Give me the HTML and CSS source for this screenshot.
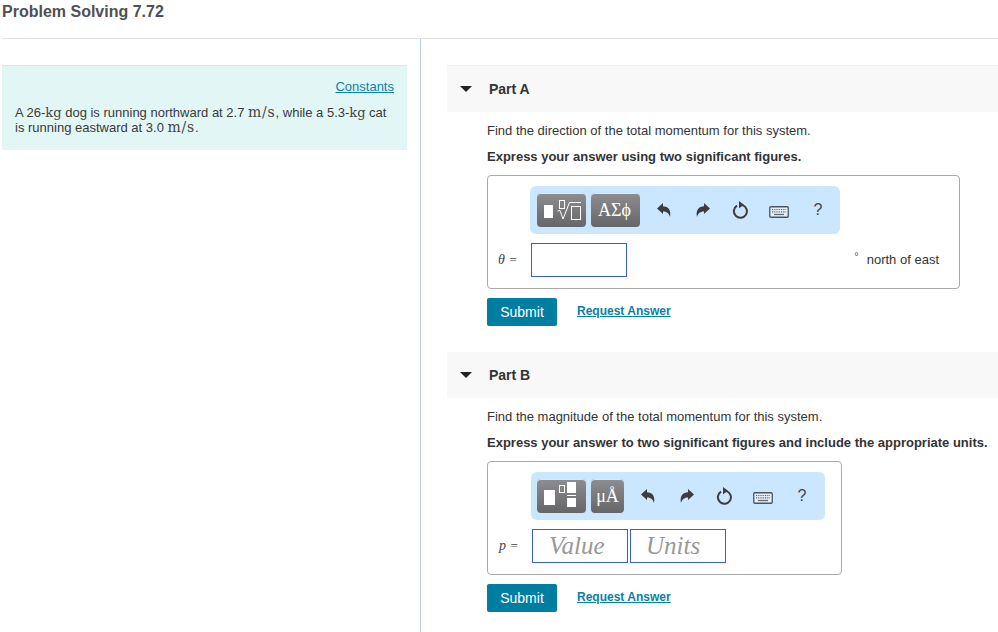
FILE: index.html
```html
<!DOCTYPE html>
<html lang="en">
<head>
<meta charset="utf-8">
<title>Problem Solving 7.72</title>
<link rel="stylesheet" href="styles.css">
</head>
<body>
<header class="page-head"><h1>Problem Solving 7.72</h1></header>
<main class="layout">
  <aside class="left">
    <section class="intro">
      <div class="constants"><a href="#">Constants</a></div>
      <p>A 26-<span class="math kg">kg</span> dog is running northward at 2.7 <span class="math ms">m/s</span>, while a 5.3-<span class="math kg">kg</span> cat is running eastward at 3.0 <span class="math ms">m/s</span>.</p>
    </section>
  </aside>
  <div class="right">
    <section class="part part-a">
      <div class="part-head"><span class="caret"></span><h2>Part A</h2></div>
      <div class="part-body">
        <p class="q">Find the direction of the total momentum for this system.</p>
        <p class="q strong">Express your answer using two significant figures.</p>
        <div class="answer answer-a">
          <div class="toolbar toolbar-a">
            <button class="tbtn wide" type="button">
              <svg width="49" height="34" viewBox="0 0 49 34"><rect x="7" y="12" width="9" height="13" fill="#fff"/><rect x="22.500" y="7.500" width="5" height="8" fill="none" stroke="#fff"/><path d="M20.500 18 23 17.500 26 26 32.500 9.500H44" fill="none" stroke="#fff"/><rect x="34.500" y="13.500" width="9" height="13" fill="none" stroke="#fff"/></svg>
            </button>
            <button class="tbtn sym wide" type="button">ΑΣϕ</button>
            <div class="tools">
              <svg class="ic undo-ic" width="16" height="16" viewBox="0 0 16 16"><use href="#undo"/></svg>
              <svg class="ic redo-ic" width="16" height="16" viewBox="0 0 16 16"><use href="#redo"/></svg>
              <svg class="ic reset-ic" width="18" height="18" viewBox="0 0 18 18"><use href="#reset"/></svg>
              <svg class="ic kbd-ic" width="20" height="12" viewBox="0 0 20 12"><use href="#kbd"/></svg>
              <span class="help">?</span>
            </div>
          </div>
          <div class="entry">
            <span class="var">θ <i>=</i></span>
            <span class="field"></span>
            <span class="unit"><sup>°</sup><span>north of east</span></span>
          </div>
        </div>
        <div class="actions"><button class="submit" type="button">Submit</button><a class="req" href="#">Request Answer</a></div>
      </div>
    </section>
    <section class="part part-b">
      <div class="part-head"><span class="caret"></span><h2>Part B</h2></div>
      <div class="part-body">
        <p class="q">Find the magnitude of the total momentum for this system.</p>
        <p class="q strong">Express your answer to two significant figures and include the appropriate units.</p>
        <div class="answer answer-b">
          <div class="toolbar toolbar-b">
            <button class="tbtn wide" type="button">
              <svg width="49" height="34" viewBox="0 0 49 34"><rect x="7" y="11" width="11" height="15" fill="#fff"/><rect x="22.500" y="6.500" width="5" height="7" fill="none" stroke="#fff"/><rect x="30" y="3" width="9" height="11" fill="#fff"/><rect x="30" y="16" width="9" height="1" fill="#fff"/><rect x="30" y="19" width="9" height="9" fill="#fff"/></svg>
            </button>
            <button class="tbtn sym narrow" type="button">μÅ</button>
            <div class="tools">
              <svg class="ic undo-ic" width="16" height="16" viewBox="0 0 16 16"><use href="#undo"/></svg>
              <svg class="ic redo-ic" width="16" height="16" viewBox="0 0 16 16"><use href="#redo"/></svg>
              <svg class="ic reset-ic" width="18" height="18" viewBox="0 0 18 18"><use href="#reset"/></svg>
              <svg class="ic kbd-ic" width="20" height="12" viewBox="0 0 20 12"><use href="#kbd"/></svg>
              <span class="help">?</span>
            </div>
          </div>
          <div class="entry entry-b">
            <span class="var">p <i>=</i></span>
            <span class="field ph">Value</span>
            <span class="field ph">Units</span>
          </div>
        </div>
        <div class="actions"><button class="submit" type="button">Submit</button><a class="req" href="#">Request Answer</a></div>
      </div>
    </section>
  </div>
</main>
<svg class="defs" width="0" height="0" aria-hidden="true">
  <defs>
    <path id="undo" d="M1 6.500 7 1V4.200C12 4.200 15.500 8 14 15 12.800 11 10.500 9.500 7 9.500V12Z" fill="#3d3d3d"/>
    <path id="redo" d="M15 6.500 9 1V4.200C4 4.200 .5 8 2 15 3.200 11 5.500 9.500 9 9.500V12Z" fill="#3d3d3d"/>
    <g id="reset"><path d="M10.500 4.100A6.500 6.500 0 1 1 5 4.700" fill="none" stroke="#3d3d3d" stroke-width="2"/><path d="M7 0 12 3.800 7 7.200Z" fill="#3d3d3d"/></g>
    <g id="kbd"><rect x=".75" y=".75" width="18.500" height="10.500" rx="1" fill="#e4eef7" stroke="#4a5560" stroke-width="1.300"/><path d="M3 3.500h14M3 5.800h14" stroke="#5b6670" stroke-width="1.200" stroke-dasharray="1 .8"/><path d="M5 8.500h10" stroke="#5b6670" stroke-width="1.200"/></g>
  </defs>
</svg>
</body>
</html>
```
FILE: styles.css
```css
* { box-sizing: border-box; }
html, body { margin: 0; padding: 0; }
body {
  width: 998px;
  height: 632px;
  overflow: hidden;
  background: #fff;
  font-family: "Liberation Sans", Arial, sans-serif;
  color: #333;
}
.defs { position: absolute; }
.page-head {
  height: 39px;
  margin-left: 2px;
  border-bottom: 1px solid #dfe3e8;
}
h1 {
  margin: 0;
  padding-top: 3px;
  font-size: 16px;
  line-height: 18px;
  font-weight: 700;
  color: #505050;
}
.layout { display: flex; height: 593px; }
.left {
  width: 421px;
  flex: none;
  padding: 26px 13px 0 2px;
  border-right: 1px solid #b6cde2;
}
.intro {
  height: 85px;
  padding: 12px 13px 0 13px;
  background: #e2f6f6;
  border-top: 1px solid #d8e4e6;
}
.constants { text-align: right; line-height: 16px; height: 18px; }
.constants a { color: #0a83aa; font-size: 13px; }
.intro p { margin: 0; padding-top: 9px; line-height: 15px; font-size: 13px; color: #3a3a3a; }
.math { font-family: "DejaVu Serif", serif; line-height: 15px; color: #444; }
.kg { font-size: 13px; }
.ms { font-size: 14px; letter-spacing: .8px; }
.right { flex: 1; padding: 26px 0 0 26px; min-width: 0; }
.part-b { margin-top: 26px; }
.part-head {
  display: flex;
  align-items: center;
  height: 46px;
  background: #f8f8f8;
  padding-left: 13px;
}
.part-a .part-head { height: 47px; border-top: 1px solid #eeeeee; }
.caret {
  width: 0; height: 0;
  border-left: 6px solid transparent;
  border-right: 6px solid transparent;
  border-top: 6px solid #222;
}
h2 { margin: 0 0 0 17px; font-size: 14px; font-weight: 700; color: #333; }
.part-body { padding-left: 40px; }
.q { margin: 0; font-size: 13px; line-height: 16px; padding-top: 10px; color: #333; height: 26px; }
.q:first-child { padding-top: 11px; height: 27px; }
.strong { font-weight: 700; }
.answer {
  margin-top: 10px;
  border: 1px solid #aaa;
  border-radius: 4px;
  height: 114px;
  padding: 10px 0 0 42px;
}
.answer-a { width: 473px; }
.answer-b { width: 355px; padding-left: 43px; }
.toolbar {
  display: flex;
  align-items: center;
  height: 48px;
  background: #cbe6ff;
  border-radius: 6px;
  padding-left: 7px;
}
.toolbar-a { width: 310px; }
.toolbar-b { width: 294px; padding-left: 6px; }
.tbtn {
  height: 34px;
  margin: 0 5px 0 0;
  padding: 0;
  border: 0;
  box-shadow: inset 0 1px 0 #dfe6ec;
  border-radius: 4px;
  background: linear-gradient(#8e8e90, #666668);
  color: #fff;
  display: flex;
  align-items: center;
  justify-content: center;
}
.tbtn svg { display: block; flex: none; }
.wide { width: 49px; }
.narrow { width: 33px; }
.sym { font-family: "Liberation Serif", serif; font-size: 18px; }
.sym.wide { padding-right: 2px; }
.tools { display: flex; align-items: center; padding-left: 11px; }
.ic { display: block; flex: none; }
.redo-ic { margin-left: 23px; }
.reset-ic { margin-left: 21px; }
.kbd-ic { margin: 4px 0 0 19px; }
.help { width: 14px; margin-left: 22px; text-align: center; font-size: 16px; color: #444; }
.entry {
  display: flex;
  align-items: center;
  height: 34px;
  margin: 9px 0 0 -32px;
}
.var { width: 33px; font-family: "Liberation Serif", serif; font-style: italic; font-size: 14px; color: #444; }
.var i { font-style: normal; font-size: 13px; margin-left: 1px; }
.field {
  width: 96px;
  height: 34px;
  border: 1px solid #3a5fcd;
  display: block;
  flex: none;
}
.ph {
  font-family: "Liberation Serif", serif;
  font-style: italic;
  font-size: 25px;
  line-height: 32px;
  color: #999;
  padding-left: 16px;
  margin-right: 2px;
}
.ph + .ph { padding-left: 15px; }
.entry-b { margin-left: -33px; }
.entry-b .var { width: 34px; padding-left: 1px; }
.unit { flex: 1; display: flex; justify-content: flex-end; padding: 0 20px 2px 0; font-size: 13px; color: #333; }
.unit sup { font-size: 11px; line-height: 8px; margin-right: 8px; color: #555; }
.actions { display: flex; align-items: flex-start; margin-top: 9px; height: 28px; }
.submit {
  width: 70px;
  height: 28px;
  padding: 0;
  border: 0;
  border-radius: 2px;
  background: #007ea2;
  color: #fff;
  font: 14px "Liberation Sans", Arial, sans-serif;
}
.req {
  margin: 5px 0 0 20px;
  color: #0a7fa5;
  font-size: 12px;
  font-weight: 700;
  line-height: 16px;
}
```
